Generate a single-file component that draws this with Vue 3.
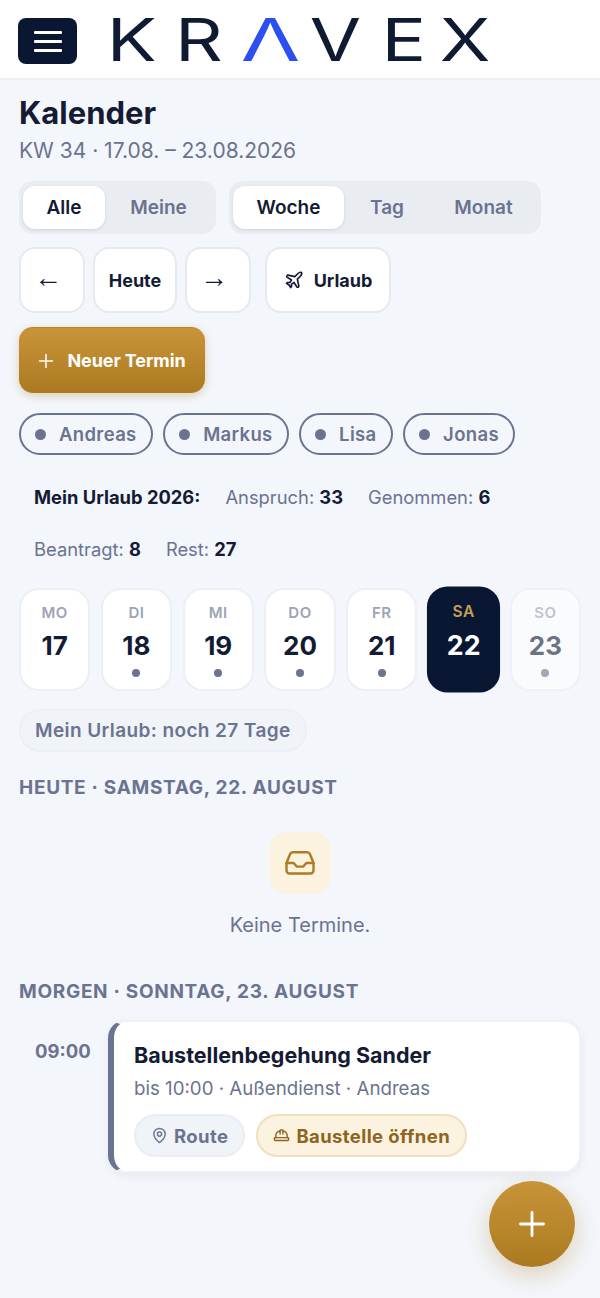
<script setup>
// -- Constants --
const logoLetters = [
  { char: 'K', width: 66 },
  { char: 'R', width: 68 },
  { char: 'Λ', width: 74, accent: true },
  { char: 'V', width: 57 },
  { char: 'E', width: 79 },
  { char: 'X', width: 45 },
];
const people = ['Andreas', 'Markus', 'Lisa', 'Jonas'];
const days = [
  { name: 'MO', num: 17, dot: false },
  { name: 'DI', num: 18, dot: true },
  { name: 'MI', num: 19, dot: true },
  { name: 'DO', num: 20, dot: true },
  { name: 'FR', num: 21, dot: true },
  { name: 'SA', num: 22, dot: false, active: true },
  { name: 'SO', num: 23, dot: true, muted: true },
];
</script>

<template>
  <div class="page">
    <header class="topbar">
      <button class="burger" aria-label="Menü">
        <span></span><span></span><span></span>
      </button>
      <div class="logo">
        <span v-for="l in logoLetters" :key="l.char" class="letter" :class="{ accent: l.accent }" :style="{ width: l.width + 'px' }"><span>{{ l.char }}</span></span>
      </div>
    </header>

    <main class="content">
      <h1>Kalender</h1>
      <p class="sub">KW 34 · 17.08. – 23.08.2026</p>

      <div class="segments">
        <div class="seg">
          <button class="on alle">Alle</button>
          <button class="meine">Meine</button>
        </div>
        <div class="seg">
          <button class="on woche">Woche</button>
          <button class="tag">Tag</button>
          <button class="monat">Monat</button>
        </div>
      </div>

      <div class="nav">
        <button class="btn square"><span class="arrow">←</span></button>
        <button class="btn heute">Heute</button>
        <button class="btn square"><span class="arrow">→</span></button>
        <button class="btn urlaub">
          <svg viewBox="0 0 24 24" width="20" height="20" fill="none" stroke="currentColor" stroke-width="2" stroke-linecap="round" stroke-linejoin="round">
            <path d="M17.8 19.2 16 11l3.5-3.5C21 6 21.5 4 21 3c-1-.5-3 0-4.5 1.5L13 8 4.8 6.2c-.5-.1-.9.1-1.1.5l-.3.5c-.2.5-.1 1 .3 1.3L9 12l-2 3H4l-1 1 3 2 2 3 1-1v-3l3-2 3.5 5.3c.3.4.8.5 1.3.3l.5-.2c.4-.3.6-.7.5-1.2z" />
          </svg>
          Urlaub
        </button>
      </div>

      <button class="primary">
        <svg viewBox="0 0 16 16" width="16" height="16" fill="none" stroke="currentColor" stroke-width="1.5" stroke-linecap="round">
          <path d="M8 1.5v13M1.5 8h13" />
        </svg>
        Neuer Termin
      </button>

      <div class="chips">
        <span v-for="p in people" :key="p" class="chip"><i></i>{{ p }}</span>
      </div>

      <div class="stats">
        <strong>Mein Urlaub 2026:</strong>
        <span>Anspruch: <b>33</b></span>
        <span>Genommen: <b>6</b></span>
        <span>Beantragt: <b>8</b></span>
        <span>Rest: <b>27</b></span>
      </div>

      <div class="week">
        <div v-for="d in days" :key="d.name" class="day" :class="{ active: d.active, muted: d.muted }">
          <span class="day-name">{{ d.name }}</span>
          <span class="day-num">{{ d.num }}</span>
          <i v-if="d.dot" class="day-dot"></i>
        </div>
      </div>

      <span class="pill">Mein Urlaub: noch 27 Tage</span>

      <h2 class="section first">HEUTE · SAMSTAG, 22. AUGUST</h2>
      <div class="empty">
        <div class="empty-icon">
          <svg viewBox="0 0 30 26" width="30" height="26" fill="none" stroke="currentColor" stroke-width="2.4" stroke-linecap="round" stroke-linejoin="round">
            <path d="M1.5 13 5 4.2A3 3 0 0 1 7.8 2.2h14.4A3 3 0 0 1 25 4.2L28.5 13v7.5a3 3 0 0 1-3 3h-21a3 3 0 0 1-3-3z" />
            <path d="M1.5 13h7.2l3 3.6h6.6l3-3.6h7.2" />
          </svg>
        </div>
        <p>Keine Termine.</p>
      </div>

      <h2 class="section">MORGEN · SONNTAG, 23. AUGUST</h2>
      <div class="entry">
        <span class="time">09:00</span>
        <article class="card">
          <h3>Baustellenbegehung Sander</h3>
          <p>bis 10:00 · Außendienst · Andreas</p>
          <div class="actions">
            <button class="act route">
              <svg viewBox="0 0 24 24" width="17" height="17" fill="none" stroke="currentColor" stroke-width="2" stroke-linecap="round" stroke-linejoin="round">
                <path d="M20 10c0 6-8 12-8 12s-8-6-8-12a8 8 0 0 1 16 0Z" />
                <circle cx="12" cy="10" r="3" />
              </svg>
              Route
            </button>
            <button class="act site">
              <svg viewBox="0 0 24 24" width="17" height="17" fill="none" stroke="currentColor" stroke-width="2" stroke-linecap="round" stroke-linejoin="round">
                <path d="M2 18a1 1 0 0 0 1 1h18a1 1 0 0 0 1-1v-2a1 1 0 0 0-1-1H3a1 1 0 0 0-1 1v2z" />
                <path d="M10 10V5a1 1 0 0 1 1-1h2a1 1 0 0 1 1 1v5" />
                <path d="M4 15v-3a6 6 0 0 1 6-6" />
                <path d="M14 6a6 6 0 0 1 6 6v3" />
              </svg>
              Baustelle öffnen
            </button>
          </div>
        </article>
      </div>
    </main>

    <button class="fab" aria-label="Neuer Termin">
      <svg viewBox="0 0 26 26" width="26" height="26" fill="none" stroke="currentColor" stroke-width="2.8" stroke-linecap="round">
        <path d="M13 1.5v23M1.5 13h23" />
      </svg>
    </button>
  </div>
</template>

<style scoped>
.page {
  position: relative;
  height: 1298px;
  overflow: hidden;
  background: #f3f6fb;
  color: #141b33;
  font-family: Inter, "Liberation Sans", sans-serif;
}

button {
  font-family: inherit;
  border: 0;
  background: none;
  padding: 0;
}

.topbar {
  height: 80px;
  box-sizing: border-box;
  background: #fff;
  border-bottom: 2px solid #eceff4;
  display: flex;
  align-items: flex-start;
  padding: 18px 18px 0;
}

.burger {
  width: 59px;
  height: 46px;
  background: #0a1733;
  border-radius: 8px;
  display: flex;
  flex-direction: column;
  align-items: center;
  justify-content: center;
  gap: 6px;
}

.burger span {
  display: block;
  width: 28px;
  height: 3px;
  background: #fff;
  border-radius: 1px;
}

.logo {
  display: flex;
  margin-left: 22px;
  margin-top: -8px;
  color: #0f1a33;
  font-size: 59px;
  line-height: 60px;
  font-weight: 400;
}

.letter {
  display: flex;
  justify-content: center;
}

.letter span {
  display: block;
  transform: scaleX(1.26);
}

.letter.accent {
  color: #2b4ff0;
}

.letter.accent span {
  transform: scaleX(1.46);
}

.content {
  padding: 0 19px;
}

h1 {
  margin: 13px 0 0;
  font-size: 31px;
  line-height: 40px;
  font-weight: 700;
}

.sub {
  margin: 5px 0 0;
  font-size: 21px;
  line-height: 26px;
  color: #6b7390;
}

.segments {
  display: flex;
  gap: 13px;
  margin-top: 17px;
}

.seg {
  display: flex;
  padding: 5px 4px;
  background: #e9edf2;
  border-radius: 14px;
}

.seg button {
  height: 43px;
  border-radius: 12px;
  font-size: 19px;
  font-weight: 600;
  color: #6b7390;
}

.seg button.on {
  background: #fff;
  color: #141b33;
  box-shadow: 0 1px 3px rgba(20, 27, 51, 0.12);
}

.alle { width: 82px; }
.meine { width: 107px; }
.woche { width: 111px; }
.tag { width: 86px; }
.monat { width: 107px; }

.nav {
  display: flex;
  gap: 8px;
  margin-top: 13px;
}

.btn {
  height: 66px;
  box-sizing: border-box;
  background: #fff;
  border: 2px solid #e6e9ef;
  border-radius: 16px;
  font-size: 18px;
  font-weight: 700;
  color: #141b33;
  display: flex;
  align-items: center;
  justify-content: center;
}

.square {
  width: 66px;
  justify-content: flex-start;
  padding-left: 13px;
}

.arrow {
  font-size: 28px;
  line-height: 28px;
  margin-top: -4px;
  font-weight: 400;
  font-family: "Liberation Sans", sans-serif;
}

.heute { width: 84px; }

.urlaub {
  width: 126px;
  gap: 10px;
  margin-left: 6px;
}

.primary {
  display: flex;
  align-items: center;
  gap: 13px;
  width: 186px;
  height: 66px;
  justify-content: center;
  margin-top: 14px;
  border-radius: 14px;
  background: linear-gradient(180deg, #c8943a, #ab7a20);
  color: #fff;
  font-size: 18px;
  font-weight: 700;
  letter-spacing: -0.1px;
  box-shadow: 0 3px 8px rgba(173, 122, 31, 0.3);
  border-top: 1px solid #b5822a;
}

.chips {
  display: flex;
  gap: 10.5px;
  margin-top: 20px;
}

.chip {
  height: 42px;
  box-sizing: border-box;
  border: 2px solid #6b7390;
  border-radius: 21px;
  padding: 0 14px;
  display: flex;
  align-items: center;
  gap: 13px;
  font-size: 18.5px;
  font-weight: 600;
  letter-spacing: 0.35px;
  color: #6b7390;
}

.chip i {
  width: 11px;
  height: 11px;
  border-radius: 50%;
  background: #6b7390;
}

.stats {
  display: flex;
  flex-wrap: wrap;
  column-gap: 25px;
  padding: 16px 15px 14px;
  font-size: 18.35px;
  line-height: 52px;
  color: #6b7390;
}

.stats strong {
  color: #141b33;
  font-weight: 700;
}

.stats b {
  color: #141b33;
  font-weight: 700;
}

.week {
  display: grid;
  grid-template-columns: repeat(7, 1fr);
  gap: 10.5px;
  margin-top: -1px;
}

.day {
  height: 103px;
  box-sizing: border-box;
  background: #fff;
  border: 2px solid #eceff4;
  border-radius: 20px;
  display: flex;
  flex-direction: column;
  align-items: center;
  padding-top: 13px;
}

.day-name {
  font-size: 15px;
  line-height: 20px;
  font-weight: 600;
  letter-spacing: 0.5px;
  color: #9da3b6;
}

.day-num {
  font-size: 26px;
  line-height: 32px;
  font-weight: 700;
  margin-top: 7px;
}

.day-dot {
  width: 8px;
  height: 8px;
  border-radius: 50%;
  background: #6b7390;
  margin-top: 7px;
}

.day.active {
  background: #0a1733;
  border-color: #0a1733;
  color: #fff;
  transform: scale(1.03);
}

.day.active .day-name {
  color: #c9a050;
}

.day.muted {
  opacity: 0.6;
}

.pill {
  display: inline-block;
  margin-top: 18px;
  height: 43px;
  box-sizing: border-box;
  padding: 0 14px;
  line-height: 39px;
  border: 2px solid #eceff3;
  border-radius: 22px;
  background: #f0f3f7;
  font-size: 19px;
  font-weight: 600;
  letter-spacing: 0.4px;
  color: #6b7390;
}

.section {
  margin: 0;
  font-size: 19px;
  line-height: 24px;
  font-weight: 700;
  letter-spacing: 0.7px;
  color: #6b7390;
}

.section.first {
  margin-top: 24px;
}

.empty {
  height: 180px;
  box-sizing: border-box;
  padding-top: 32px;
  display: flex;
  flex-direction: column;
  align-items: center;
}

.empty-icon {
  width: 62px;
  height: 62px;
  border-radius: 18px;
  background: #fbf2e0;
  color: #ad7b21;
  display: flex;
  align-items: center;
  justify-content: center;
}

.empty p {
  margin: 18px 0 0;
  font-size: 20px;
  line-height: 26px;
  color: #6b7390;
}

.entry {
  display: flex;
  margin-top: 16px;
}

.time {
  width: 89px;
  padding: 19px 0 0 16px;
  box-sizing: border-box;
  font-size: 18.5px;
  line-height: 24px;
  font-weight: 700;
  color: #6b7390;
}

.card {
  flex: 1;
  height: 153px;
  box-sizing: border-box;
  background: #fff;
  border: 2px solid #eef1f5;
  border-left: 6px solid #6b7390;
  border-radius: 18px;
  padding: 19px 20px 0;
  box-shadow: 0 3px 10px rgba(20, 27, 51, 0.06);
}

.card h3 {
  margin: 0;
  font-size: 21.5px;
  line-height: 28px;
  font-weight: 700;
}

.card p {
  margin: 7px 0 0;
  font-size: 18.7px;
  line-height: 26px;
  color: #6b7390;
}

.actions {
  display: flex;
  gap: 11px;
  margin-top: 12px;
}

.act {
  height: 43px;
  box-sizing: border-box;
  border-radius: 22px;
  padding: 0 15px;
  display: flex;
  align-items: center;
  gap: 6px;
  font-size: 18.5px;
  font-weight: 700;
  letter-spacing: 0.4px;
}

.route {
  background: #f0f3f7;
  border: 2px solid #eaedf2;
  color: #6b7390;
}

.site {
  background: #fbf2e0;
  border: 2px solid #efe0c0;
  color: #8f6420;
}

.fab {
  position: absolute;
  left: 489px;
  top: 1181px;
  width: 86px;
  height: 86px;
  border-radius: 50%;
  background: linear-gradient(180deg, #c8943a, #ab7a20);
  color: #fff;
  display: flex;
  align-items: center;
  justify-content: center;
  box-shadow: 0 8px 24px rgba(173, 122, 31, 0.3);
}
</style>

<style>
body {
  background: #f3f6fb;
}
</style>
